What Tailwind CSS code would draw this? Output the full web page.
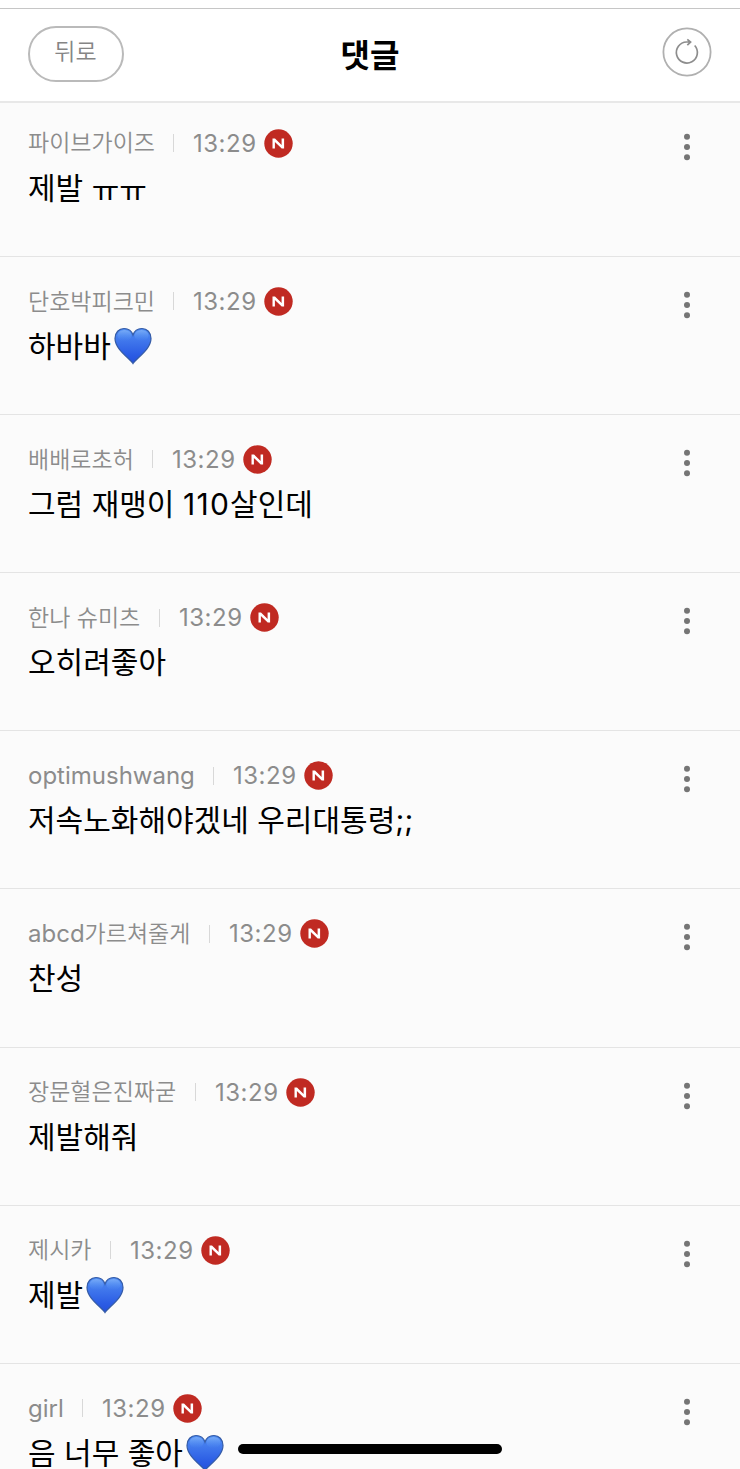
<!DOCTYPE html>
<html lang="ko">
<head>
<meta charset="utf-8">
<title>댓글</title>
<script src="https://cdn.jsdelivr.net/npm/@tailwindcss/browser@4"></script>
</head>
<body class="h-[1469px] overflow-hidden bg-[#fbfbfb] font-['Inter','Noto_Sans_CJK_KR',sans-serif] text-black">
<svg class="absolute size-0">
  <defs>
    <linearGradient id="hg" x1="0" y1="0" x2="0" y2="1"><stop offset="0" stop-color="#4f8df2"/><stop offset=".35" stop-color="#4077ec"/><stop offset=".75" stop-color="#2b5ce4"/><stop offset="1" stop-color="#2450dc"/></linearGradient>
    <linearGradient id="hs" x1="0" y1="0" x2="0" y2="1"><stop offset="0" stop-color="#8fbcfa" stop-opacity=".65"/><stop offset="1" stop-color="#5b9cf8" stop-opacity="0"/></linearGradient>
  </defs>
  <symbol id="n" viewBox="0 0 29 29"><circle cx="14.500" cy="14.500" r="14.200" fill="#c02a22"/><path d="M8.500 19.600V9.400H11L17.600 15.900V9.400H20.100V19.600H17.700L10.900 13V19.600Z" fill="#fff"/></symbol>
  <symbol id="dots" viewBox="0 0 8 28"><g fill="#757575"><circle cx="4" cy="3.700" r="3"/><circle cx="4" cy="14" r="3"/><circle cx="4" cy="24.300" r="3"/></g></symbol>
  <symbol id="heart" viewBox="0 0 38 38"><path d="M19 36.500C16 31.500 1 22.500 1 11.500C1 5.500 5 1.500 10 1.500C14.500 1.500 17.800 4.200 19 8C20.200 4.200 23.500 1.500 28 1.500C33 1.500 37 5.500 37 11.500C37 22.500 22 31.500 19 36.500Z" fill="url(#hg)" stroke="#345ba6" stroke-width="1.200"/><ellipse cx="10.500" cy="8.500" rx="7" ry="5.500" fill="url(#hs)"/><ellipse cx="27.500" cy="8.500" rx="7" ry="5.500" fill="url(#hs)"/></symbol>
</svg>
<header class="flex h-[102.500px] flex-col border-b-2 border-[#e8e8e8] bg-white pt-2">
  <div class="h-px shrink-0 bg-[#c6c6c6]"></div>
  <div class="grid grid-cols-[1fr_auto_1fr] items-start px-7">
    <button class="mt-[17px] flex h-[56px] w-[96px] justify-center rounded-full border-2 border-[#bababa] pt-[8px] pr-[1px] text-[23px] leading-[32px] font-[350] text-[#858585]">뒤로</button>
    <h1 class="mt-[25px] text-[32px] leading-[44px] font-bold">댓글</h1>
    <svg class="mt-[18px] size-[50px] justify-self-end" viewBox="0 0 50 50" fill="none"><circle cx="25" cy="25" r="23.600" stroke="#b0b0b0" stroke-width="1.800"/><path d="M32.700 18.500A10.500 10.500 0 1 1 24.500 15H28M25.300 12.300L28.600 15L25.300 18.200" stroke="#8d8d8d" stroke-width="1.700"/></svg>
  </div>
</header>
<main>
  <article class="flex h-[154.300px] justify-between border-b border-[#e4e4e4] pr-[49px] pl-7 pt-[24px]">
    <div><div class="flex h-[33px] items-center text-[24px] whitespace-nowrap text-[#8c8c8c]"><span class="w-[126px] pt-px text-[23px] font-[350]">파이브가이즈</span><i class="mx-[19px] h-[18px] w-px bg-[#d8d8d8]"></i><span class="w-[64px] pt-px tracking-[0.5px]">13:29</span><svg class="ml-[7px] size-[29px]"><use href="#n"/></svg></div>
    <p class="flex h-[54px] items-center pt-[3px] text-[30px] whitespace-pre">제발 <span class="pt-[5px]">ㅠㅠ</span></p></div>
    <svg class="mt-[6px] h-[28px] w-2"><use href="#dots"/></svg>
  </article>
  <article class="flex h-[158.150px] justify-between border-b border-[#e4e4e4] pr-[49px] pl-7 pt-[28px]">
    <div><div class="flex h-[33px] items-center text-[24px] whitespace-nowrap text-[#8c8c8c]"><span class="w-[126px] pt-px text-[23px] font-[350]">단호박피크민</span><i class="mx-[19px] h-[18px] w-px bg-[#d8d8d8]"></i><span class="w-[64px] pt-px tracking-[0.5px]">13:29</span><svg class="ml-[7px] size-[29px]"><use href="#n"/></svg></div>
    <p class="flex h-[54px] items-center pt-[3px] text-[30px] whitespace-pre">하바바<svg class="ml-[3px] size-[38px]"><use href="#heart"/></svg></p></div>
    <svg class="mt-[6px] h-[28px] w-2"><use href="#dots"/></svg>
  </article>
  <article class="flex h-[158.150px] justify-between border-b border-[#e4e4e4] pr-[49px] pl-7 pt-[28px]">
    <div><div class="flex h-[33px] items-center text-[24px] whitespace-nowrap text-[#8c8c8c]"><span class="w-[105px] pt-px text-[23px] font-[350]">배배로초허</span><i class="mx-[19px] h-[18px] w-px bg-[#d8d8d8]"></i><span class="w-[64px] pt-px tracking-[0.5px]">13:29</span><svg class="ml-[7px] size-[29px]"><use href="#n"/></svg></div>
    <p class="flex h-[54px] items-center pt-[3px] text-[30px] whitespace-pre">그럼 재맹이 <span class="tracking-[1.3px]">110</span>살인데</p></div>
    <svg class="mt-[6px] h-[28px] w-2"><use href="#dots"/></svg>
  </article>
  <article class="flex h-[158.150px] justify-between border-b border-[#e4e4e4] pr-[49px] pl-7 pt-[28px]">
    <div><div class="flex h-[33px] items-center text-[24px] whitespace-nowrap text-[#8c8c8c]"><span class="w-[112px] pt-px text-[23px] font-[350]">한나 슈미츠</span><i class="mx-[19px] h-[18px] w-px bg-[#d8d8d8]"></i><span class="w-[64px] pt-px tracking-[0.5px]">13:29</span><svg class="ml-[7px] size-[29px]"><use href="#n"/></svg></div>
    <p class="flex h-[54px] items-center pt-[3px] text-[30px] whitespace-pre">오히려좋아</p></div>
    <svg class="mt-[6px] h-[28px] w-2"><use href="#dots"/></svg>
  </article>
  <article class="flex h-[158.150px] justify-between border-b border-[#e4e4e4] pr-[49px] pl-7 pt-[28px]">
    <div><div class="flex h-[33px] items-center text-[24px] whitespace-nowrap text-[#8c8c8c]"><span class="w-[166px] pt-px text-[24px]">optimushwang</span><i class="mx-[19px] h-[18px] w-px bg-[#d8d8d8]"></i><span class="w-[64px] pt-px tracking-[0.5px]">13:29</span><svg class="ml-[7px] size-[29px]"><use href="#n"/></svg></div>
    <p class="flex h-[54px] items-center pt-[3px] text-[30px] whitespace-pre">저속노화해야겠네 우리대통령;;</p></div>
    <svg class="mt-[6px] h-[28px] w-2"><use href="#dots"/></svg>
  </article>
  <article class="flex h-[158.150px] justify-between border-b border-[#e4e4e4] pr-[49px] pl-7 pt-[28px]">
    <div><div class="flex h-[33px] items-center text-[24px] whitespace-nowrap text-[#8c8c8c]"><span class="w-[162px] pt-px text-[23px] font-[350]"><span class="text-[24px] font-normal">abcd</span>가르쳐줄게</span><i class="mx-[19px] h-[18px] w-px bg-[#d8d8d8]"></i><span class="w-[64px] pt-px tracking-[0.5px]">13:29</span><svg class="ml-[7px] size-[29px]"><use href="#n"/></svg></div>
    <p class="flex h-[54px] items-center pt-[3px] text-[30px] whitespace-pre">찬성</p></div>
    <svg class="mt-[6px] h-[28px] w-2"><use href="#dots"/></svg>
  </article>
  <article class="flex h-[158.150px] justify-between border-b border-[#e4e4e4] pr-[49px] pl-7 pt-[28px]">
    <div><div class="flex h-[33px] items-center text-[24px] whitespace-nowrap text-[#8c8c8c]"><span class="w-[148px] pt-px text-[23px] font-[350]">장문혈은진짜굳</span><i class="mx-[19px] h-[18px] w-px bg-[#d8d8d8]"></i><span class="w-[64px] pt-px tracking-[0.5px]">13:29</span><svg class="ml-[7px] size-[29px]"><use href="#n"/></svg></div>
    <p class="flex h-[54px] items-center pt-[3px] text-[30px] whitespace-pre">제발해줘</p></div>
    <svg class="mt-[6px] h-[28px] w-2"><use href="#dots"/></svg>
  </article>
  <article class="flex h-[158.150px] justify-between border-b border-[#e4e4e4] pr-[49px] pl-7 pt-[28px]">
    <div><div class="flex h-[33px] items-center text-[24px] whitespace-nowrap text-[#8c8c8c]"><span class="w-[63px] pt-px text-[23px] font-[350]">제시카</span><i class="mx-[19px] h-[18px] w-px bg-[#d8d8d8]"></i><span class="w-[64px] pt-px tracking-[0.5px]">13:29</span><svg class="ml-[7px] size-[29px]"><use href="#n"/></svg></div>
    <p class="flex h-[54px] items-center pt-[3px] text-[30px] whitespace-pre">제발<svg class="ml-[3px] size-[38px]"><use href="#heart"/></svg></p></div>
    <svg class="mt-[6px] h-[28px] w-2"><use href="#dots"/></svg>
  </article>
  <article class="flex justify-between pr-[49px] pl-7 pt-[28px]">
    <div><div class="flex h-[33px] items-center text-[24px] whitespace-nowrap text-[#8c8c8c]"><span class="w-[35px] pt-px text-[24px]">girl</span><i class="mx-[19px] h-[18px] w-px bg-[#d8d8d8]"></i><span class="w-[64px] pt-px tracking-[0.5px]">13:29</span><svg class="ml-[7px] size-[29px]"><use href="#n"/></svg></div>
    <p class="flex h-[54px] items-center pt-[3px] text-[30px] whitespace-pre">음 너무 좋아<svg class="ml-[3px] size-[38px]"><use href="#heart"/></svg></p></div>
    <svg class="mt-[6px] h-[28px] w-2"><use href="#dots"/></svg>
  </article>
</main>
<div class="fixed bottom-[15px] left-[238px] h-[10px] w-[264px] rounded-full bg-black"></div>
</body>
</html>
